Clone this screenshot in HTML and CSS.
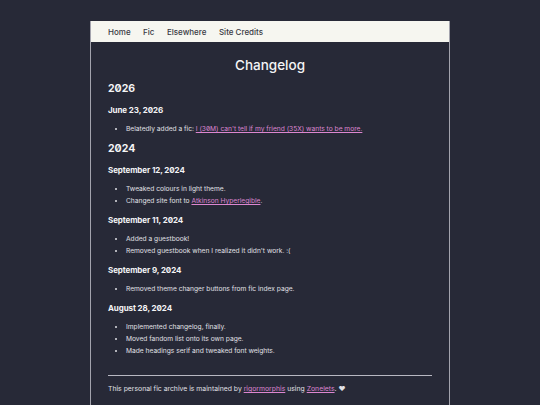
FILE: index.html
```html
<!DOCTYPE html>
<html>
<head>
<meta charset="utf-8">
<link rel="stylesheet" href="styles.css">
</head>
<body>
<div class="page">
  <nav class="nav">
    <a href="#">Home</a>
    <a href="#">Fic</a>
    <a href="#">Elsewhere</a>
    <a href="#">Site Credits</a>
  </nav>
  <main class="main">
    <h1 class="title">Changelog</h1>
    <h2 class="year">2026</h2>
    <h3 class="date">June 23, 2026</h3>
    <ul class="items">
      <li>Belatedly added a fic: <a href="#">I (30M) can't tell if my friend (35X) wants to be more.</a></li>
    </ul>
    <h2 class="year">2024</h2>
    <h3 class="date">September 12, 2024</h3>
    <ul class="items">
      <li>Tweaked colours in light theme.</li>
      <li>Changed site font to <a href="#">Atkinson Hyperlegible</a>.</li>
    </ul>
    <h3 class="date">September 11, 2024</h3>
    <ul class="items">
      <li>Added a guestbook!</li>
      <li>Removed guestbook when I realized it didn't work. :(</li>
    </ul>
    <h3 class="date">September 9, 2024</h3>
    <ul class="items">
      <li>Removed theme changer buttons from fic index page.</li>
    </ul>
    <h3 class="date">August 28, 2024</h3>
    <ul class="items">
      <li>Implemented changelog, finally.</li>
      <li>Moved fandom list onto its own page.</li>
      <li>Made headings serif and tweaked font weights.</li>
    </ul>
    <footer class="footer">
      <p>This personal fic archive is maintained by <a href="#">rigormorphis</a> using <a href="#">Zonelets</a>. &#9829;</p>
    </footer>
  </main>
</div>
</body>
</html>
```

FILE: styles.css
```css
html, body {
  margin: 0;
  padding: 0;
  background: #272937;
}
body {
  font-family: Inter, "Noto Sans", sans-serif;
  color: #e0e0e6;
  font-feature-settings: "zero" 1;
}
.page {
  width: 358px;
  margin: 21px auto 0;
  border-left: 1px solid #a3a3ad;
  border-right: 1px solid #a3a3ad;
  min-height: 400px;
}
.nav {
  background: #f6f6f0;
  height: 21px;
  display: flex;
  align-items: center;
  gap: 12.5px;
  padding: 0 17px;
}
.nav a {
  color: #3a3a44;
  text-decoration: none;
  font-size: 8px;
  font-weight: 500;
}
.main {
  padding: 0 17px;
}
.title {
  margin: 13px 0 0;
  text-align: center;
  font-size: 13.5px;
  font-weight: 500;
  line-height: 20px;
  color: #f4f4f6;
}
.year {
  margin: 6px 0 0;
  font-size: 10.5px;
  font-weight: 700;
  line-height: 16px;
  color: #f4f4f6;
}
.date {
  margin: 7px 0 0;
  font-size: 8px;
  font-weight: 700;
  letter-spacing: -0.1px;
  line-height: 12px;
  color: #f4f4f6;
}
.items {
  margin: 7px 0 0;
  padding-left: 18px;
  font-size: 6.65px;
  line-height: 12px;
}
.items + .date {
  margin-top: 7px;
}
a {
  color: #dc86d0;
}
.footer {
  margin-top: 18px;
  border-top: 1px solid #b8b8c2;
}
.footer p {
  margin: 7px 0 0;
  font-size: 6.85px;
  line-height: 12px;
}
```
